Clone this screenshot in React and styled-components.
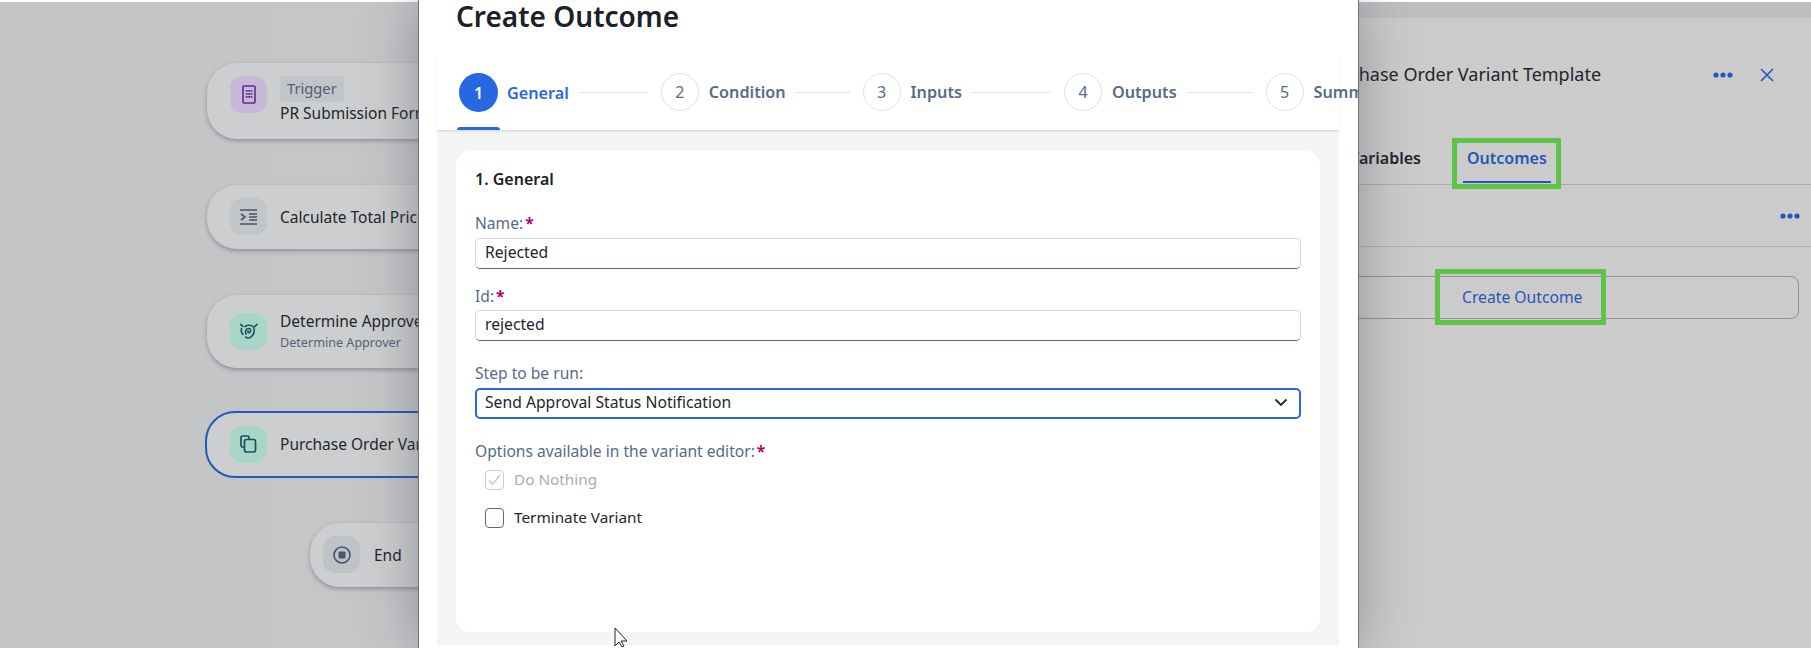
import React from 'react';
import styled, { createGlobalStyle, css } from 'styled-components';

const FONT = `"Noto Sans", "Open Sans", Arial, sans-serif`;

const GlobalStyle = createGlobalStyle`
  html, body {
    margin: 0;
    padding: 0;
    background: #fff;
    font-family: ${FONT};
  }
`;

const Page = styled.div`
  position: relative;
  width: 1811px;
  height: 648px;
  overflow: hidden;
  display: flex;
  padding-top: 2px;
  box-sizing: border-box;
  background: #fff;
`;

const Canvas = styled.div`
  width: 1359px;
  flex: none;
  box-sizing: border-box;
  padding: 61px 0 0 207px;
  display: flex;
  flex-direction: column;
  background: linear-gradient(90deg, #c3c4c6 0%, #c5c6c8 30%, #c4c5c8 100%);
`;

const Node = styled.div`
  display: flex;
  align-items: center;
  gap: ${(p) => p.$gap || 13}px;
  box-sizing: border-box;
  flex: none;
  width: ${(p) => p.$width || 420}px;
  height: ${(p) => p.$height}px;
  margin-top: ${(p) => p.$top || 0}px;
  margin-left: ${(p) => p.$left || 0}px;
  padding: 0 0 1px ${(p) => p.$pad || 23}px;
  border-radius: 30px;
  background: #cdcecf;
  box-shadow: 0 2px 4px rgba(60, 70, 85, 0.4);
  color: #22272e;
  font-size: 15.5px;
  white-space: nowrap;

  ${(p) =>
    p.$selected &&
    css`
      border: 2px solid #2657b8;
      margin-left: -2px;
      padding-left: 23px;
      box-shadow: none;
    `}
`;

const NodeIcon = styled.div`
  width: 37px;
  height: 37px;
  flex: none;
  border-radius: 12px;
  display: flex;
  align-items: center;
  justify-content: center;
  align-self: ${(p) => (p.$top ? 'flex-start' : 'center')};
  margin-top: ${(p) => (p.$top ? '13px' : '0')};
  background: ${(p) => p.$color};
`;

const NodeText = styled.div`
  display: flex;
  flex-direction: column;
  align-items: flex-start;
  line-height: 20px;
  align-self: ${(p) => (p.$top ? 'flex-start' : 'center')};
  margin-top: ${(p) => (p.$top ? '13px' : '0')};
`;

const Tag = styled.span`
  height: 26px;
  line-height: 25px;
  padding: 0 7px;
  margin-bottom: 1px;
  border-radius: 4px;
  background: #c1c4c8;
  color: #525f75;
  font-size: 14.7px;
`;

const NodeSub = styled.span`
  margin-top: 3px;
  color: #556178;
  font-size: 12.6px;
  line-height: 18px;
`;

const Panel = styled.div`
  flex: 1;
  min-width: 0;
  display: flex;
  flex-direction: column;
  background: #cbcbcb;
`;

const PanelTopStrip = styled.div`
  height: 16px;
  flex: none;
  background: #bdbec0;
`;

const PanelHeader = styled.div`
  height: 125px;
  flex: none;
  display: flex;
  align-items: flex-start;
  padding: 42px 37px 0 0;
  box-sizing: border-box;
  position: relative;
  overflow: hidden;
`;

const PanelTitle = styled.h2`
  margin: 0;
  position: absolute;
  left: -38px;
  top: 44px;
  color: #1f252d;
  font-size: 18px;
  font-weight: 400;
  white-space: nowrap;
`;

const HeaderActions = styled.div`
  margin-left: auto;
  display: flex;
  align-items: center;
  gap: 27px;
  height: 30px;
`;

const TabRow = styled.div`
  height: 42px;
  flex: none;
  display: flex;
  box-sizing: border-box;
  border-bottom: 1px solid #a9abad;
  padding-left: 104px;
  position: relative;
  color: #1f252d;
  font-size: 16px;
  font-weight: 600;
`;

const TabLabel = styled.span`
  position: relative;
  height: 40px;
  line-height: 30px;
  padding: 0 4px;
  white-space: nowrap;
  color: ${(p) => (p.$active ? '#2657b8' : '#1f252d')};
  ${(p) =>
    p.$active &&
    css`
      &::after {
        content: '';
        position: absolute;
        left: 0;
        right: 0;
        bottom: 0;
        height: 2px;
        background: #2657b8;
      }
    `}
`;

const TabBehind = styled.span`
  position: absolute;
  right: 390px;
  top: 0;
  line-height: 30px;
  white-space: nowrap;
`;

const SubRow = styled.div`
  height: 62px;
  flex: none;
  display: flex;
  align-items: center;
  justify-content: flex-end;
  box-sizing: border-box;
  padding: 0 11px 0 0;
  border-bottom: 1px solid #aeb0b3;
`;

const ButtonWrap = styled.div`
  padding: 29px 12px 0 0;
  margin-left: -20px;
`;

const GhostButton = styled.div`
  height: 43px;
  box-sizing: border-box;
  border: 1px solid #8d929b;
  border-radius: 8px;
  color: #2657b8;
  font-size: 15.7px;
  display: flex;
  align-items: center;
  padding: 0 0 2px 122px;
  white-space: nowrap;
`;

const Dialog = styled.div`
  position: absolute;
  left: 418px;
  top: 0;
  width: 941px;
  height: 648px;
  background: #fff;
  border-left: 1px solid #70747c;
  border-right: 1px solid #70747c;
  box-sizing: border-box;
  box-shadow: 0 0 50px rgba(60, 65, 75, 0.42);
  display: flex;
  flex-direction: column;
  padding: 0 19px 0 18px;
  overflow: hidden;
`;

const DialogTitle = styled.h1`
  margin: 0;
  height: 55px;
  flex: none;
  padding-left: 19px;
  color: #1a2129;
  font-size: 28px;
  line-height: 32px;
  font-weight: 600;
  white-space: nowrap;
`;

const Stepper = styled.div`
  height: 76px;
  flex: none;
  box-sizing: border-box;
  border-bottom: 1px solid #dcdee1;
  box-shadow: 0 1px 2px rgba(0, 0, 0, 0.06);
  display: flex;
  align-items: flex-start;
  padding: 18px 0 0 22px;
  position: relative;
`;

const Step = styled.div`
  display: flex;
  align-items: center;
  flex: none;
`;

const StepCircle = styled.div`
  width: ${(p) => (p.$active ? 39 : 38)}px;
  height: ${(p) => (p.$active ? 39 : 38)}px;
  box-sizing: border-box;
  border-radius: 50%;
  display: flex;
  align-items: center;
  justify-content: center;
  font-size: 16px;
  flex: none;
  color: ${(p) => (p.$active ? '#fff' : '#556b8a')};
  background: ${(p) => (p.$active ? '#2767e0' : '#fff')};
  border: ${(p) => (p.$active ? 'none' : '1px solid #dfe2e6')};
  font-weight: ${(p) => (p.$active ? 600 : 400)};
`;

const StepName = styled.span`
  margin-left: ${(p) => (p.$active ? 9 : 10)}px;
  font-size: 16.2px;
  font-weight: 600;
  white-space: nowrap;
  color: ${(p) => (p.$active ? '#2767e0' : '#556b8a')};
`;

const StepLine = styled.div`
  width: ${(p) => p.$width}px;
  height: 1px;
  flex: none;
  margin: 0 13px 0 10px;
  background: #dfe2e6;
`;

const ActiveBar = styled.div`
  position: absolute;
  left: 20px;
  bottom: 0;
  width: 43px;
  height: 3px;
  border-radius: 3px 3px 0 0;
  background: #2767e0;
`;

const Body = styled.div`
  height: 514px;
  flex: none;
  box-sizing: border-box;
  background: #f4f5f7;
  padding: 20px 19px 0;
`;

const Card = styled.div`
  height: 481px;
  box-sizing: border-box;
  background: #fff;
  border-radius: 14px;
  padding: 18px 19px 0;
`;

const CardTitle = styled.div`
  color: #1a2129;
  font-size: 16px;
  font-weight: 600;
  line-height: 20px;
  margin-bottom: 24px;
`;

const Label = styled.div`
  color: #556b8a;
  font-size: 15.6px;
  line-height: 20px;
  margin-bottom: ${(p) => p.$gap ?? 5}px;
  display: flex;
`;

const Star = styled.span`
  color: #b5006f;
  font-weight: 700;
  margin-left: 2px;
`;

const Field = styled.div`
  height: 31px;
  box-sizing: border-box;
  border: 1px solid #d5dae2;
  border-bottom: 1px solid #556b8a;
  border-radius: 5px;
  margin-bottom: ${(p) => p.$mb}px;
  padding: 0 8px 3px 9px;
  display: flex;
  align-items: center;
  justify-content: space-between;
  color: #1f252d;
  font-size: 15.7px;

  ${(p) =>
    p.$focused &&
    css`
      border: 2px solid #2767e0;
      padding: 0 11px 3px 8px;
    `}
`;

const CheckRow = styled.div`
  display: flex;
  align-items: center;
  gap: 10px;
  height: 20px;
  margin: ${(p) => p.$top}px 0 0 10px;
  font-size: 15.3px;
  line-height: 18px;
  color: ${(p) => (p.$disabled ? '#a9acb1' : '#1f252d')};
`;

const CheckLabel = styled.span`
  margin-top: -3px;
`;

const CheckBox = styled.div`
  width: 19px;
  height: 20px;
  box-sizing: border-box;
  flex: none;
  border-radius: 4px;
  border: 1px solid ${(p) => (p.$disabled ? '#c5cedd' : '#556b8a')};
  display: flex;
  align-items: center;
  justify-content: center;
`;

const Highlight = styled.div`
  position: absolute;
  box-sizing: border-box;
  left: ${(p) => p.$x}px;
  top: ${(p) => p.$y}px;
  width: ${(p) => p.$w}px;
  height: ${(p) => p.$h}px;
  border: 5px solid #5fc348;
  pointer-events: none;
`;

const Cursor = styled.svg`
  position: absolute;
  left: 613px;
  top: 627px;
`;

const Dots = ({ color = '#2657b8' }) => (
  <svg width="20" height="6" viewBox="0 0 20 6">
    <circle cx="3" cy="3" r="2.6" fill={color} />
    <circle cx="10" cy="3" r="2.6" fill={color} />
    <circle cx="17" cy="3" r="2.6" fill={color} />
  </svg>
);

const FormIcon = () => (
  <svg width="14" height="19" viewBox="0 0 14 19" fill="none">
    <rect x="1" y="1" width="12" height="17" rx="1" stroke="#5b2d91" strokeWidth="1.6" />
    <path d="M3.800 5h1.800v1.800H3.800zM6.200 5H8v1.800H6.200zM8.600 5h1.800v1.800H8.600zM3.800 8h1.800v1.800H3.800zM6.200 8H8v1.800H6.200zM8.600 8h1.800v1.800H8.600zM3.800 11h1.800v1.800H3.800zM6.200 11H8v1.800H6.200zM8.600 11h1.800v1.800H8.600z" fill="#5b2d91" />
  </svg>
);

const IndentIcon = () => (
  <svg width="18" height="16" viewBox="0 0 18 16" fill="none" stroke="#47566c" strokeWidth="1.6">
    <path d="M0 1h17M9 5h8M9 8h8M9 11h8M0 15h17" />
    <path d="M1 5l4 3-4 3" />
  </svg>
);

const ApproverIcon = () => (
  <svg width="18" height="16" viewBox="0 0 18 16" fill="none" stroke="#17525c" strokeWidth="1.6" strokeLinecap="round">
    <path d="M5 3.500C7 2 11 1.500 13 3.500c2 2 1.500 6.500-.5 9-2 2.500-5 3-7 1.500" />
    <path d="M6 11C4.500 8.500 6 5.500 8.700 5.500c2.300 0 2.800 3 .8 4-1 .5-2-.5-1.500-1.500" />
    <path d="M1.500 5.500c-.5 2 0 4.500 1.500 6M.5 1.300l2.200 2M17 1.300l-2.200 2" />
  </svg>
);

const CopyIcon = () => (
  <svg width="17" height="18" viewBox="0 0 17 18" fill="none" stroke="#17525c" strokeWidth="1.7">
    <path d="M4 12H2.500A1.500 1.500 0 0 1 1 10.500v-8A1.500 1.500 0 0 1 2.500 1h5A1.500 1.500 0 0 1 9 2.500V4" />
    <rect x="4.500" y="4.500" width="11" height="12.500" rx="2" />
  </svg>
);

const StopIcon = () => (
  <svg width="18" height="18" viewBox="0 0 18 18" fill="none">
    <circle cx="9" cy="9" r="8" stroke="#47566c" strokeWidth="1.6" />
    <rect x="5.500" y="5.500" width="7" height="7" rx="1" fill="#47566c" />
  </svg>
);

const steps = [
  { n: 1, name: 'General', line: 69, active: true },
  { n: 2, name: 'Condition', line: 54 },
  { n: 3, name: 'Inputs', line: 79 },
  { n: 4, name: 'Outputs', line: 66 },
  { n: 5, name: 'Summary' },
];

export default function App() {
  return (
    <Page>
      <GlobalStyle />
      <Canvas>
        <Node $height={76}>
          <NodeIcon $color="#c9b9d9" $top>
            <FormIcon />
          </NodeIcon>
          <NodeText $top>
            <Tag>Trigger</Tag>
            PR Submission Form
          </NodeText>
        </Node>
        <Node $height={64} $top={46}>
          <NodeIcon $color="#c3c6c9">
            <IndentIcon />
          </NodeIcon>
          Calculate Total Price
        </Node>
        <Node $height={73} $top={46}>
          <NodeIcon $color="#a8d5c8">
            <ApproverIcon />
          </NodeIcon>
          <NodeText>
            Determine Approver
            <NodeSub>Determine Approver</NodeSub>
          </NodeText>
        </Node>
        <Node $height={67} $top={43} $selected>
          <NodeIcon $color="#a8d5c8">
            <CopyIcon />
          </NodeIcon>
          Purchase Order Variant Template
        </Node>
        <Node $height={64} $top={45} $left={103} $width={250} $pad={13} $gap={14}>
          <NodeIcon $color="#bfc2c6">
            <StopIcon />
          </NodeIcon>
          End
        </Node>
      </Canvas>

      <Panel>
        <PanelTopStrip />
        <PanelHeader>
          <PanelTitle>Purchase Order Variant Template</PanelTitle>
          <HeaderActions>
            <Dots />
            <svg width="14" height="14" viewBox="0 0 14 14" stroke="#2657b8" strokeWidth="1.6">
              <path d="M1 1l12 12M13 1L1 13" />
            </svg>
          </HeaderActions>
        </PanelHeader>
        <TabRow>
          <TabBehind>Variables</TabBehind>
          <TabLabel $active>Outcomes</TabLabel>
        </TabRow>
        <SubRow>
          <Dots />
        </SubRow>
        <ButtonWrap>
          <GhostButton>Create Outcome</GhostButton>
        </ButtonWrap>
      </Panel>

      <Dialog>
        <DialogTitle>Create Outcome</DialogTitle>
        <Stepper>
          {steps.map((s) => (
            <Step key={s.n}>
              <StepCircle $active={s.active}>{s.n}</StepCircle>
              <StepName $active={s.active}>{s.name}</StepName>
              {s.line && <StepLine $width={s.line} />}
            </Step>
          ))}
          <ActiveBar />
        </Stepper>
        <Body>
          <Card>
            <CardTitle>1. General</CardTitle>
            <Label>
              Name:<Star>*</Star>
            </Label>
            <Field $mb={17}>Rejected</Field>
            <Label $gap={4}>
              Id:<Star>*</Star>
            </Label>
            <Field $mb={22}>rejected</Field>
            <Label>Step to be run:</Label>
            <Field $focused $mb={22}>
              Send Approval Status Notification
              <svg width="14" height="9" viewBox="0 0 14 9" fill="none" stroke="#22272e" strokeWidth="1.8">
                <path d="M1.500 1.500L7 7l5.500-5.500" />
              </svg>
            </Field>
            <Label $gap={9}>
              Options available in the variant editor:<Star>*</Star>
            </Label>
            <CheckRow $top={0} $disabled>
              <CheckBox $disabled>
                <svg width="13" height="12" viewBox="0 0 13 12" fill="none" stroke="#b3caf0" strokeWidth="1.4">
                  <path d="M1 6.500L4.500 10.500 12 1" />
                </svg>
              </CheckBox>
              <CheckLabel>Do Nothing</CheckLabel>
            </CheckRow>
            <CheckRow $top={18}>
              <CheckBox />
              <CheckLabel>Terminate Variant</CheckLabel>
            </CheckRow>
          </Card>
        </Body>
      </Dialog>

      <Highlight $x={1452} $y={138} $w={109} $h={51} />
      <Highlight $x={1435} $y={269} $w={171} $h={56} />

      <Cursor width="20" height="22" viewBox="0 0 20 22">
        <path d="M2 1v18l4-4 3 5 2-1-3-5h6z" fill="#fff" stroke="#222" strokeWidth="1" />
      </Cursor>
    </Page>
  );
}
